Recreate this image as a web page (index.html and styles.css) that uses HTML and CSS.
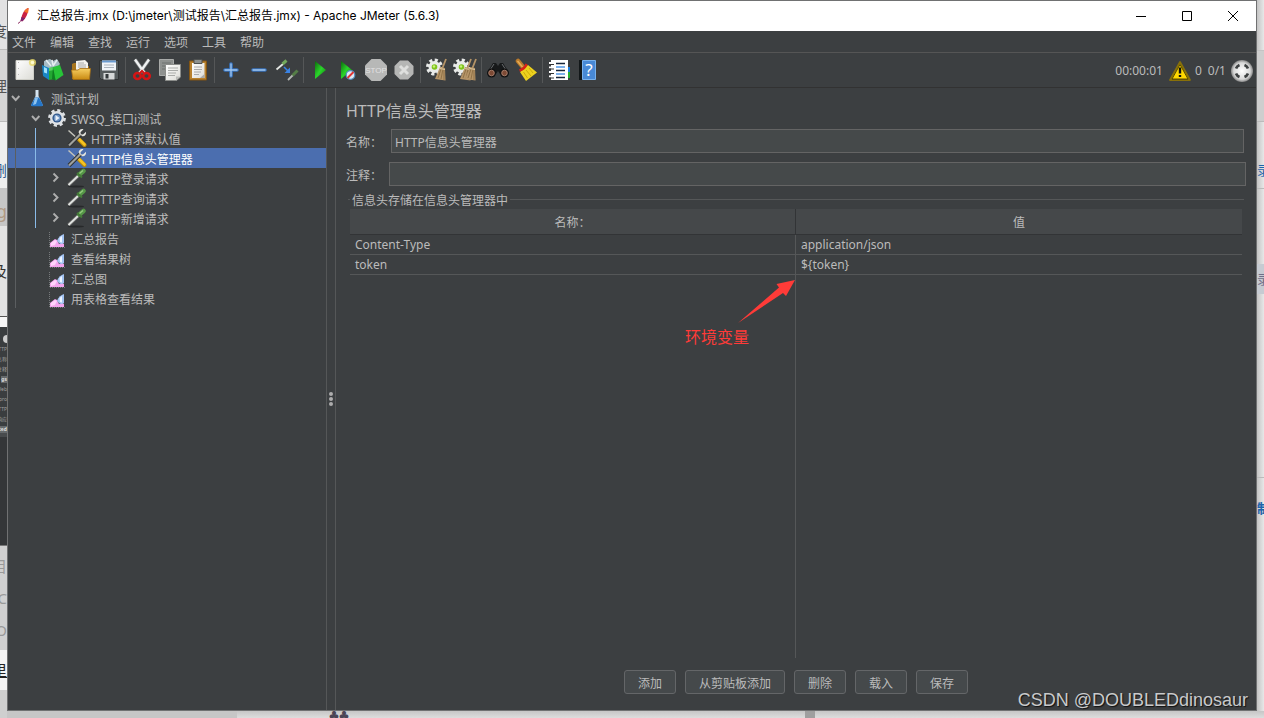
FILE: index.html
```html
<!DOCTYPE html>
<html lang="zh-CN">
<head>
<meta charset="utf-8">
<title>汇总报告.jmx - Apache JMeter (5.6.3)</title>
<link rel="stylesheet" href="styles.css">
</head>
<body>
<svg class="defs" aria-hidden="true">
  <defs>
    <linearGradient id="gold" x2="0" y2="1"><stop stop-color="#f7cf62"/><stop offset="1" stop-color="#c98a12"/></linearGradient>
    <linearGradient id="green" x2="1" y2="1"><stop stop-color="#0b6b0b"/><stop offset=".5" stop-color="#2bd52b"/><stop offset="1" stop-color="#0a7a0a"/></linearGradient>
    <linearGradient id="paper" x2="1" y2="1"><stop stop-color="#fff"/><stop offset="1" stop-color="#dcdcd6"/></linearGradient>
    <radialGradient id="ball"><stop stop-color="#fff"/><stop offset=".75" stop-color="#d8d8d8"/><stop offset="1" stop-color="#888"/></radialGradient>
    <symbol id="chev-down" viewBox="0 0 15 20"><path d="M4 8l3.700 4 3.700-4" fill="none" stroke="#adadad" stroke-width="1.900"/></symbol>
    <symbol id="chev-right" viewBox="0 0 15 20"><path d="M5.500 5.500l4 4-4 4" fill="none" stroke="#adadad" stroke-width="1.900"/></symbol>
    <symbol id="tools" viewBox="0 0 20 20">
      <path d="M1.500 2.500l10 9" stroke="#c4c4bc" stroke-width="1.500"/><path d="M12 11.500l5.500 5.500" stroke="#b88a08" stroke-width="4" stroke-linecap="round"/><path d="M12 11l5.500 5.500" stroke="#f7c321" stroke-width="2.600" stroke-linecap="round"/>
      <path d="M2 17.500L13.500 6" stroke="#2f3131" stroke-width="4"/><path d="M2 17.500L13.500 6" stroke="#a0a29e" stroke-width="2.200"/>
      <path d="M16.500 1.200l-3 3 .3 2.100 2.200.3 3-2.800c.5 2.600-1.200 4.800-3.700 4.500l-3.600-3.200c-.4-2.700 2-4.800 4.800-3.900z" fill="#e4e4df"/>
    </symbol>
    <symbol id="dropper" viewBox="0 0 20 20">
      <ellipse cx="9" cy="18.500" rx="8" ry="1" fill="#27292a"/>
      <path d="M1.500 17L11 8" stroke="#666" stroke-width="3.600"/><path d="M1.500 17L11 8" stroke="#e0e3e0" stroke-width="1.800"/>
      <path d="M12.500 6.500L16.500 3" stroke="#559647" stroke-width="4.500" stroke-linecap="round"/><path d="M10 5l5 4.500" stroke="#447a38" stroke-width="2"/><path d="M12.500 5.500l3.500-3" stroke="#96cd80" stroke-width="1.300"/>
    </symbol>
    <symbol id="graph" viewBox="0 0 20 20">
      <path d="M2.500 4v15.500H18" fill="none" stroke="#777a7c" stroke-dasharray="1 1"/>
      <path d="M3 19v-4l5-4 2 1 2 4 3-1 2 1v3z" fill="#f3a5ee"/><path d="M4 15l4-3 2 1-2 4-4 1z" fill="#ffd3fb"/>
      <path d="M17 6v9c-2.500 2-5.500.5-7-2.500C11.500 9 14 7 17 6z" fill="#a4c4f3"/><path d="M12.500 10L15 8v6.500l-2-.5z" fill="#eef5ff"/>
    </symbol>
    <symbol id="gear" viewBox="0 0 20 20">
      <circle cx="10" cy="10" r="7.600" fill="none" stroke="#dfe2e5" stroke-width="2.600" stroke-dasharray="3.200 2.770"/>
      <circle cx="10" cy="10" r="7" fill="#dfe2e5"/><circle cx="10" cy="10" r="4.600" fill="#31588b"/><circle cx="10" cy="10" r="3.200" fill="#6d93c4"/><path d="M8.500 7l4 3-4 3z" fill="#e9f1fa"/>
    </symbol>
    <symbol id="broomgear" viewBox="0 0 24 24">
      <circle cx="9.500" cy="9" r="6.800" fill="none" stroke="#e9ebe9" stroke-width="3.400" stroke-dasharray="3 2.340"/><circle cx="9.500" cy="9" r="6" fill="#e9ebe9"/><circle cx="9.500" cy="9" r="2.800" fill="#7fc41c"/><circle cx="9" cy="8.500" r="1.200" fill="#c8f07a"/>
    </symbol>
    <symbol id="broom" viewBox="0 0 12 24">
      <path d="M11 1L7.500 10" stroke="#b59467" stroke-width="1.800"/><path d="M5 9l5 1 .5 12.500L0 21z" fill="#b59467"/><path d="M6 11L3 20M8 11l-2 10M9 12v10" stroke="#80633a" stroke-width=".7"/><path d="M4.500 10.500l5.500 1" stroke="#dcc69e"/>
    </symbol>
  </defs>
</svg>

<div class="desktop">
  <div class="strip strip-left" aria-hidden="true">
    <div class="seg seg-a"><span>度</span></div>
    <div class="seg seg-b"><span>理</span></div>
    <div class="seg seg-c"><span>删</span></div>
    <div class="seg seg-d"><span>ng</span></div>
    <div class="seg seg-e"><span>及</span></div>
    <div class="seg seg-f"></div>
    <div class="seg seg-g"><i></i><span>HTTP</span><span>名称</span><span>注释</span><b>gs</b><span>Web</span><span>pro</span><span>HTTP</span><span>响应</span><b>ted</b></div>
    <div class="seg seg-h"><span>目</span><span>C</span><span>O</span></div>
    <div class="seg seg-i"><span>里</span></div>
    <div class="seg seg-j"></div>
  </div>

  <div class="window">
    <header class="titlebar">
      <svg class="feather" viewBox="0 0 16 18" aria-hidden="true"><path d="M12.500 1c-3 .5-5.500 4-7 9l-1 4 2 .2c3.500-3 5.700-7.500 6-13.200z" fill="#c92043"/><path d="M12.500 1c-2 .4-3.500 1.800-4.500 3.800l4 1.500c.4-1.500.5-3.500.5-5.300z" fill="#f2702a"/><path d="M5.500 10l-1 4 2 .2 2.500-3z" fill="#7d256f"/><path d="M4.500 14.500l-2.500 2" stroke="#8a285e"/></svg>
      <h1>汇总报告.jmx (D:\jmeter\测试报告\汇总报告.jmx) - Apache JMeter (5.6.3)</h1>
      <div class="winbtns">
        <button aria-label="最小化"><svg viewBox="0 0 12 12"><path d="M1 6.500h10" stroke="#000"/></svg></button>
        <button aria-label="最大化"><svg viewBox="0 0 12 12"><path d="M1.500 1.500h9v9h-9z" fill="none" stroke="#000"/></svg></button>
        <button aria-label="关闭"><svg viewBox="0 0 12 12"><path d="M1 1l10 10M11 1L1 11" stroke="#000"/></svg></button>
      </div>
    </header>

    <nav class="menubar">
      <button>文件</button><button>编辑</button><button>查找</button><button>运行</button><button>选项</button><button>工具</button><button>帮助</button>
    </nav>

    <div class="toolbar">
      <button aria-label="新建"><svg viewBox="0 0 24 24"><path d="M3 2.500h17.500v19H3z" fill="url(#paper)" stroke="#cfcfc8"/><path d="M5.500 4v16" stroke="#bbb" stroke-dasharray="1 5"/><circle cx="19.500" cy="4.500" r="3.600" fill="#e9d968" opacity=".8"/><circle cx="19.500" cy="4.500" r="1.800" fill="#fffbd0"/></svg></button>
      <button aria-label="模板"><svg viewBox="0 0 24 24"><path d="M3 3l6-2 3 2 4-2 3 5-4 5-12-1z" fill="#a6bcc4"/><path d="M5 2l5 6M11 2l1 5M16 2l-4 6" stroke="#e6eef0" stroke-width="1.500"/><path d="M1 7l7 3v12l-6-4z" fill="#1a86c4"/><path d="M8 10l6-1v12l-6 1z" fill="#23a832"/><path d="M8 10l6-1-1 3-5 1z" fill="#55d060"/><path d="M12 9l7-2 3.500 10-8 5.500z" fill="#27c438"/><path d="M12 9l2.500 13.500L11 21z" fill="#0e7f21"/><path d="M3 9l3 1.500v5l-3-1z" fill="#9fe3ff"/></svg></button>
      <button aria-label="打开"><svg viewBox="0 0 24 24"><path d="M3 6l2-1h6l2 3h7v13H3z" fill="#a8761f"/><path d="M7 3l9-1 3 3v9H7z" fill="#f3f3ef"/><path d="M9 5h6M9 7h8M9 9h8" stroke="#aaa"/><path d="M2.500 12H9l2-1.500h10.500L20.500 21.500H4z" fill="url(#gold)" stroke="#a66d12" stroke-width=".8"/></svg></button>
      <button aria-label="保存"><svg viewBox="0 0 24 24"><path d="M2.500 2.500h19v19h-17l-2-2z" fill="#555b5c" stroke="#303334"/><path d="M5 2.500h14v10H5z" fill="#f0f4f8"/><path d="M5 2.500h14v2H5z" fill="#6a9bd0"/><path d="M7 7h10M7 9.500h10" stroke="#aab2bb"/><path d="M6.500 15h11v6.500h-11z" fill="#d5d8d8"/><path d="M8.500 16h3v4.500h-3z" fill="#33393b"/></svg></button>
      <span class="sep"></span>
      <button aria-label="剪切"><svg viewBox="0 0 24 24"><path d="M5 1.500L14.500 15M19 1.500L9.500 15" stroke="#7b7f80" stroke-width="3.800"/><path d="M5 1.500L14.500 15M19 1.500L9.500 15" stroke="#f0f2f2" stroke-width="2.200"/><ellipse cx="7.500" cy="18" rx="3.300" ry="3" fill="none" stroke="#d31515" stroke-width="2.600"/><ellipse cx="16.500" cy="18" rx="3.300" ry="3" fill="none" stroke="#d31515" stroke-width="2.600"/><path d="M10 15l2-2 2 2" fill="none" stroke="#d31515" stroke-width="2"/></svg></button>
      <button aria-label="复制"><svg viewBox="0 0 24 24"><path d="M1.500 1.500h14v16h-14z" fill="#8e918f" stroke="#a9aba9"/><path d="M4 5h9M4 8h9M4 11h9" stroke="#6d706f"/><path d="M7.500 6.500h15V19l-4 3.500h-11z" fill="url(#paper)" stroke="#8b8d8a"/><path d="M10 10h10M10 12.500h10M10 15h8M10 17.500h7" stroke="#a9aba8"/><path d="M22 18.500h-4v4" fill="#bcbdba"/></svg></button>
      <button aria-label="粘贴"><svg viewBox="0 0 24 24"><path d="M3.500 3h17v19h-17z" fill="#b8812d" stroke="#825514"/><path d="M6 5h12.500v15H6z" fill="url(#paper)"/><path d="M8 1.500h8v4H8z" fill="#8d918f" stroke="#4e5150"/><path d="M8 9h8M8 11.500h8M8 14h7M8 16.500h5" stroke="#aaa"/><path d="M18.500 16v4H14z" fill="#aaa"/></svg></button>
      <span class="sep"></span>
      <button aria-label="展开"><svg viewBox="0 0 24 24"><path d="M12 6v12M6 12h12" stroke="#3773bd" stroke-width="3.600" stroke-linecap="round"/><path d="M12 6v12M6 12h12" stroke="#a3c8f0" stroke-width="1.300" stroke-linecap="round"/></svg></button>
      <button aria-label="折叠"><svg viewBox="0 0 24 24"><path d="M6 12h12" stroke="#3773bd" stroke-width="3.600" stroke-linecap="round"/><path d="M6 12h12" stroke="#a3c8f0" stroke-width="1.300" stroke-linecap="round"/></svg></button>
      <button aria-label="切换"><svg viewBox="0 0 24 24"><path d="M1.500 11.500L8 6" stroke="#e4e7e4" stroke-width="1.800"/><path d="M7.500 6l4-3.500" stroke="#74a95c" stroke-width="3"/><path d="M13 22l5-5" stroke="#b4b7b4" stroke-width="1.800"/><path d="M17.500 17.500l5-5" stroke="#557d47" stroke-width="3"/><path d="M9 9l4 4" stroke="#3a83e4" stroke-width="1.600"/><path d="M15 9.500V15H9.500z" fill="#3a83e4"/></svg></button>
      <span class="sep"></span>
      <button aria-label="启动"><svg viewBox="0 0 24 24"><path d="M7 3l11 9L7 21z" fill="url(#green)"/></svg></button>
      <button aria-label="不停顿启动"><svg viewBox="0 0 24 24"><path d="M5 3l11 9L5 21z" fill="url(#green)"/><circle cx="14.500" cy="17" r="4.300" fill="#dce8f3" stroke="#538fc1" stroke-width="1.200"/><path d="M11.500 20l6-6" stroke="#df3434" stroke-width="2"/></svg></button>
      <button aria-label="停止"><svg viewBox="0 0 24 24"><path d="M7.500 1h9L23 7.500v9L16.500 23h-9L1 16.500v-9z" fill="#b7b8b7"/><text x="12" y="15" text-anchor="middle" class="stop">STOP</text></svg></button>
      <button aria-label="关闭"><svg viewBox="0 0 24 24"><path d="M8 2.500h8L21.500 8v8L16 21.500H8L2.500 16V8z" fill="#b5b6b5"/><path d="M8 8l8 8M16 8l-8 8" stroke="#dedfde" stroke-width="3"/></svg></button>
      <span class="sep"></span>
      <button aria-label="清除"><svg viewBox="0 0 24 24"><use href="#broomgear" width="24" height="24"/><use href="#broom" x="10" width="12" height="24"/></svg></button>
      <button aria-label="清除全部"><svg viewBox="0 0 24 24"><use href="#broomgear" x="-1" width="24" height="24"/><use href="#broom" x="7" width="12" height="24"/><use href="#broom" x="12" width="12" height="24"/></svg></button>
      <span class="sep"></span>
      <button aria-label="搜索"><svg viewBox="0 0 24 24"><path d="M2 13l5-8h3l2 3 2-3h3l5 8-3 4-5-1-2-3-2 3-5 1z" fill="#17191a"/><path d="M8 6l-4 6M16 6l4 6" stroke="#6a6d6f"/><circle cx="5.500" cy="15" r="4.500" fill="#111"/><circle cx="18.500" cy="15" r="4.500" fill="#111"/><circle cx="5.500" cy="15" r="2.800" fill="#7d4a35" stroke="#b98d79" stroke-width=".8"/><circle cx="18.500" cy="15" r="2.800" fill="#7d4a35" stroke="#b98d79" stroke-width=".8"/></svg></button>
      <button aria-label="重置搜索"><svg viewBox="0 0 24 24"><path d="M4 3l5 6" stroke="#b97a2c" stroke-width="4.500" stroke-linecap="round"/><path d="M3.500 3l5 6" stroke="#e8ad55" stroke-width="1.500"/><path d="M6 14l8-7 9 7.500L12 23z" fill="#ecd11e"/><path d="M9.500 14l4 6M12 12l5 6M15 10l4 5" stroke="#c7a608" stroke-width=".9"/><path d="M5.500 12.500c3-1 6-3.500 7-6.500" fill="none" stroke="#d92117" stroke-width="2.400"/></svg></button>
      <span class="sep"></span>
      <button aria-label="函数助手"><svg viewBox="0 0 24 24"><path d="M19 9h4v5h-4z" fill="#1c7ee0"/><path d="M19 14h4v6h-4z" fill="#22ae30"/><path d="M4 2h17v20H4z" fill="#fff"/><path d="M9 5.500h9M9 12.500h9M9 19.500h9" stroke="#16263b" stroke-width="1.300"/><path d="M9 9h9M9 16h9" stroke="#5097e5" stroke-width="1.300"/><path d="M2 5h5M2 9.500h5M2 14h5M2 18.500h5" stroke="#fff" stroke-width="2"/><path d="M2 6.500h5M2 11h5M2 15.500h5M2 20h5" stroke="#333"/></svg></button>
      <button aria-label="帮助"><svg viewBox="0 0 24 24"><path d="M4 2h4v20H4z" fill="#121719"/><path d="M7.500 2.500h13v19h-13z" fill="#4889d6" stroke="#78b1ec"/><text x="14" y="18" text-anchor="middle" class="qmark">?</text></svg></button>
      <div class="status">
        <span>00:00:01</span>
        <svg class="warn" viewBox="0 0 24 24" aria-hidden="true"><path d="M12 3l10 18H2z" fill="#ffd800" stroke="#88700a" stroke-width="1.800" stroke-linejoin="round"/><path d="M12 5.500l8 14.500H4z" fill="none" stroke="#302800" stroke-width=".8"/><path d="M12 8.500v6M12 16v2" stroke="#101010" stroke-width="2.400"/></svg>
        <span>0</span><span class="threads">0/1</span>
        <svg class="ball" viewBox="0 0 24 24" aria-hidden="true"><circle cx="12" cy="12" r="11" fill="url(#ball)"/><path d="M9.500 6a6.700 6.700 0 0 0-3.500 3.500M18 9.500A6.700 6.700 0 0 0 14.500 6M14.500 18a6.700 6.700 0 0 0 3.500-3.500M6 14.500A6.700 6.700 0 0 0 9.500 18" fill="none" stroke="#3e4142" stroke-width="2.800"/></svg>
      </div>
    </div>

    <div class="workspace">
      <aside class="tree">
        <ul>
          <li><div class="row"><svg class="chev"><use href="#chev-down"/></svg><svg class="ico" viewBox="0 0 20 20"><path d="M8.500 2h3v6l4 8.500c.4 1-.1 1.500-1 1.500h-9c-1 0-1.400-.5-1-1.500L8.500 8z" fill="#d5e4ef"/><path d="M8 9.500h4l3.800 7c.4 1-.3 1.700-1 1.700H5.200c-.9 0-1.400-.7-1-1.700z" fill="#2476c9"/><path d="M8 10h3l-2 6-3 1z" fill="#8fc4ef"/></svg><span>测试计划</span></div>
            <ul class="lv1">
              <li><div class="row"><svg class="chev"><use href="#chev-down"/></svg><svg class="ico"><use href="#gear"/></svg><span>SWSQ_接口i测试</span></div>
                <ul class="lv2">
                  <li><div class="row"><i class="chev"></i><svg class="ico"><use href="#tools"/></svg><span>HTTP请求默认值</span></div></li>
                  <li><div class="row selected"><i class="chev"></i><svg class="ico"><use href="#tools"/></svg><span>HTTP信息头管理器</span></div></li>
                  <li><div class="row"><svg class="chev"><use href="#chev-right"/></svg><svg class="ico"><use href="#dropper"/></svg><span>HTTP登录请求</span></div></li>
                  <li><div class="row"><svg class="chev"><use href="#chev-right"/></svg><svg class="ico"><use href="#dropper"/></svg><span>HTTP查询请求</span></div></li>
                  <li><div class="row"><svg class="chev"><use href="#chev-right"/></svg><svg class="ico"><use href="#dropper"/></svg><span>HTTP新增请求</span></div></li>
                </ul>
              </li>
              <li><div class="row"><i class="chev"></i><svg class="ico"><use href="#graph"/></svg><span>汇总报告</span></div></li>
              <li><div class="row"><i class="chev"></i><svg class="ico"><use href="#graph"/></svg><span>查看结果树</span></div></li>
              <li><div class="row"><i class="chev"></i><svg class="ico"><use href="#graph"/></svg><span>汇总图</span></div></li>
              <li><div class="row"><i class="chev"></i><svg class="ico"><use href="#graph"/></svg><span>用表格查看结果</span></div></li>
            </ul>
          </li>
        </ul>
      </aside>
      <div class="splitter"><i></i><i></i><i></i></div>
      <main class="panel">
        <h2>HTTP信息头管理器</h2>
        <div class="field field-name"><label for="name">名称：</label><input id="name" type="text" value="HTTP信息头管理器"></div>
        <div class="field"><label for="comment">注释：</label><input id="comment" type="text"></div>
        <fieldset>
          <legend>信息头存储在信息头管理器中</legend>
          <div class="tablewrap">
            <table>
              <thead><tr><th>名称：</th><th>值</th></tr></thead>
              <tbody>
                <tr><td>Content-Type</td><td>application/json</td></tr>
                <tr><td>token</td><td>${token}</td></tr>
              </tbody>
            </table>
            <div class="note">
              <svg viewBox="0 0 60 46" aria-hidden="true"><path d="M59 1L40.500 5l2.500 3.500L2 44l45-30 3 3z" fill="#ff3b38"/></svg>
              <span>环境变量</span>
            </div>
          </div>
        </fieldset>
        <div class="actions">
          <button>添加</button><button>从剪贴板添加</button><button>删除</button><button>载入</button><button>保存</button>
        </div>
      </main>
    </div>
    <div class="watermark">CSDN @DOUBLEDdinosaur</div>
  </div>

  <div class="strip strip-right" aria-hidden="true">
    <div class="rs rs-a"></div>
    <div class="rs rs-b"></div>
    <div class="rs rs-c"><span>录</span></div>
    <div class="rs rs-d"></div>
    <div class="rs rs-e"><span>录</span></div>
    <div class="rs rs-f"></div>
    <div class="rs rs-g"><span>制</span></div>
  </div>
  <div class="strip-bottom" aria-hidden="true"><i class="bs-a"></i><i class="bs-b"></i><span>♣♣</span><i class="bs-c"></i><i class="bs-d"></i></div>
</div>
</body>
</html>
```

FILE: styles.css
```css
* { box-sizing: border-box; }
body {
  margin: 0;
  font: 12px/16px "Noto Sans", "Noto Sans CJK SC", sans-serif;
  color: #bbbbbb;
}
button { font: inherit; color: inherit; background: none; border: 0; padding: 0; }
h1, h2, ul, fieldset, legend { margin: 0; padding: 0; border: 0; font-weight: 400; }
ul { list-style: none; }
svg { display: block; flex: none; }
.defs { position: absolute; width: 0; height: 0; }

.desktop {
  display: grid;
  grid-template-columns: 7px minmax(0, 1fr) 7px;
  grid-template-rows: minmax(0, 1fr) 7px;
  height: 100vh;
  background: #dedede;
  overflow: hidden;
}

/* Page that shows behind the window */
.strip { display: flex; flex-direction: column; overflow: hidden; color: #555; font-size: 15px; }
.strip-left { grid-row: 1 / 3; }
.seg { flex: none; display: flex; flex-direction: column; align-items: flex-end; justify-content: center; overflow: hidden; white-space: nowrap; }
.seg-a { height: 50px; padding-top: 12px; background: #e2e2e3; border-bottom: 1px solid #bbb; }
.seg-b { height: 72px; background: #d6d6d6; border-bottom: 1px solid #bbb; }
.seg-c { height: 66px; padding-top: 30px; background: #eeeeee; color: #335f91; }
.seg-d { height: 38px; padding-top: 8px; background: #c6c6c6; color: #b09a84; font-size: 18px; }
.seg-e { height: 90px; background: #e3e3e3; color: #333; }
.seg-f { height: 11px; background: #f6f6f6; border-top: 1px solid #555; }
.seg-g { height: 219px; justify-content: flex-start; gap: 3px; padding-top: 8px; background: linear-gradient(#3a3d3f 0 100px, #484b4d 100px 110px, #343638 110px); color: #a0a0a0; font-size: 5px; line-height: 7px; border-bottom: 1px solid #777; }
.seg-g i { flex: none; width: 4px; height: 8px; border-radius: 4px 0 0 4px; background: #ccc; }
.seg-g b { background: #666a6c; color: #ddd; }
.seg-h { height: 104px; gap: 16px; background: #d0d0d0; color: #999; }
.seg-i { height: 40px; background: #f4f4f4; color: #222; text-decoration: underline; }
.seg-j { flex: 1; background: #cfcfcf; }
.strip-right { background: linear-gradient(90deg, #c4c4c4, #e8e8e8); }
.rs { flex: none; overflow: hidden; display: flex; flex-direction: column; justify-content: center; font-size: 13px; color: #1d65ab; }
.rs-a { height: 51px; border-bottom: 1px solid #c4c4c4; }
.rs-b { height: 71px; background: #cecece; border-bottom: 1px solid #bbb; }
.rs-c { height: 67px; padding-top: 30px; border-bottom: 1px solid #bbb; }
.rs-d { height: 75px; }
.rs-e { height: 30px; background: #c6cbd2; color: #706e88; }
.rs-f { height: 184px; border-bottom: 1px solid #bbb; }
.rs-g { height: 60px; font-weight: 700; }
.strip-bottom { grid-column: 2 / 4; display: flex; overflow: hidden; background: linear-gradient(#c6c6c6, #dddddd); }
.strip-bottom span { width: 20px; color: #4b4556; font-size: 10px; line-height: 8px; }
.strip-bottom i { flex: none; }
.bs-a { width: 230px; background: #c6c6c6; }
.bs-b { width: 92px; }
.bs-c { width: 456px; }
.bs-d { width: 10px; background: #9f9f9f; }

.window {
  position: relative;
  display: flex;
  flex-direction: column;
  min-width: 0;
  border: 1px solid #707172;
  background: #3c3f41;
}

.titlebar { display: flex; align-items: center; height: 30px; padding-left: 8px; background: #fff; color: #000; }
.feather { width: 16px; height: 18px; margin-right: 5px; }
.titlebar h1 { font: 12px/16px Inter, "Noto Sans CJK SC", sans-serif; white-space: nowrap; }
.winbtns { display: flex; margin-left: auto; }
.winbtns button { width: 46px; height: 30px; display: grid; place-items: center; }
.winbtns svg { width: 12px; height: 12px; }

.menubar { display: flex; gap: 14px; height: 22px; padding: 2px 0 0 4px; border-bottom: 1px solid #555555; }

.toolbar { display: flex; align-items: center; height: 35px; padding-left: 3px; border-bottom: 1px solid #323232; }
.toolbar button { width: 28px; height: 28px; display: grid; place-items: center; }
.toolbar button svg { width: 24px; height: 24px; }
.sep { width: 1px; height: 26px; margin: 0 2px; background: #555758; }
.stop { font: 8px "Liberation Sans", sans-serif; fill: #e2e2e2; }
.qmark { font: 17px "Noto Sans", sans-serif; fill: #fff; }
.status { display: flex; align-items: center; margin-left: auto; padding: 2px 2px 0 0; }
.warn { width: 24px; height: 24px; margin: 0 3px 0 5px; }
.threads { margin: 0 4px 0 6px; }
.ball { width: 24px; height: 24px; }

.workspace { flex: 1; display: flex; min-height: 0; }
.tree { width: 318px; overflow: hidden; }
.row { display: flex; align-items: center; height: 20px; white-space: nowrap; }
.row span { margin-left: 4px; padding-top: 3px; }
.lv1 .row { padding-left: 20px; }
.lv2 .row { padding-left: 40px; }
.selected { background: #4b6eaf; color: #ffffff; }
.chev { flex: none; width: 15px; height: 20px; }
.ico { width: 20px; height: 20px; margin-left: 4px; }
.lv1, .lv2 { position: relative; }
.lv1::after, .lv2::after { content: ""; position: absolute; top: 0; bottom: 0; left: 7px; width: 1px; background: #5b5e60; }
.lv2::after { left: 27px; background: #8abbe8; }

.splitter {
  flex: none;
  width: 10px;
  display: flex;
  flex-direction: column;
  align-items: center;
  justify-content: center;
  gap: 1px;
  border: solid #555758;
  border-width: 0 1px;
}
.splitter i { width: 4px; height: 4px; border-radius: 2px; background: #adadad; }

.panel { flex: 1; min-width: 0; display: flex; flex-direction: column; padding: 12px 10px 16px; }
.panel h2 { font-size: 16px; line-height: 22px; margin-bottom: 7px; }
.field { display: flex; align-items: center; margin-bottom: 9px; }
.field label { width: 43px; padding-top: 3px; }
.field-name { padding-right: 2px; }
.field-name label { width: 45px; }
.field input {
  flex: 1;
  min-width: 0;
  height: 24px;
  padding: 2px 3px 0;
  border: 1px solid #646464;
  background: #45494a;
  color: #bbbbbb;
  font: inherit;
}
fieldset { flex: 1; min-width: 0; min-height: 0; display: flex; flex-direction: column; border-top: 1px solid #555758; margin: -4px 2px 0; padding: 0 2px; }
legend { height: 16px; padding: 0 2px; line-height: 20px; }
.tablewrap {
  position: relative;
  flex: 1;
  margin-top: 2px;
  background: linear-gradient(90deg, transparent calc(50% - 1px), #555758 calc(50% - 1px) 50%, transparent 50%);
}
table { width: 100%; table-layout: fixed; border-collapse: separate; border-spacing: 0; }
th { height: 26px; padding: 3px 0 0; background: #45484a; border-bottom: 1px solid #323436; font-weight: 400; }
th:first-child { border-right: 1px solid #323436; }
td { height: 20px; padding: 1px 5px 0; border-bottom: 1px solid #555758; }
td:first-child { border-right: 1px solid #555758; }
.note { position: absolute; top: 70px; right: 50%; width: 111px; color: #ff3b38; font-size: 16px; line-height: 24px; }
.note svg { width: 60px; height: 46px; margin-left: 51px; }
.note span { display: block; }

.actions { display: flex; justify-content: center; gap: 9px; margin-top: 12px; }
.actions button { height: 24px; padding: 3px 13px 0; border: 1px solid #646668; border-radius: 3px; background: #45494b; }

.watermark { position: absolute; right: 8px; bottom: 0; font: 18px/20px "Liberation Sans", sans-serif; color: #c9cacb; text-shadow: 1px 1px 1px #111; }
```
